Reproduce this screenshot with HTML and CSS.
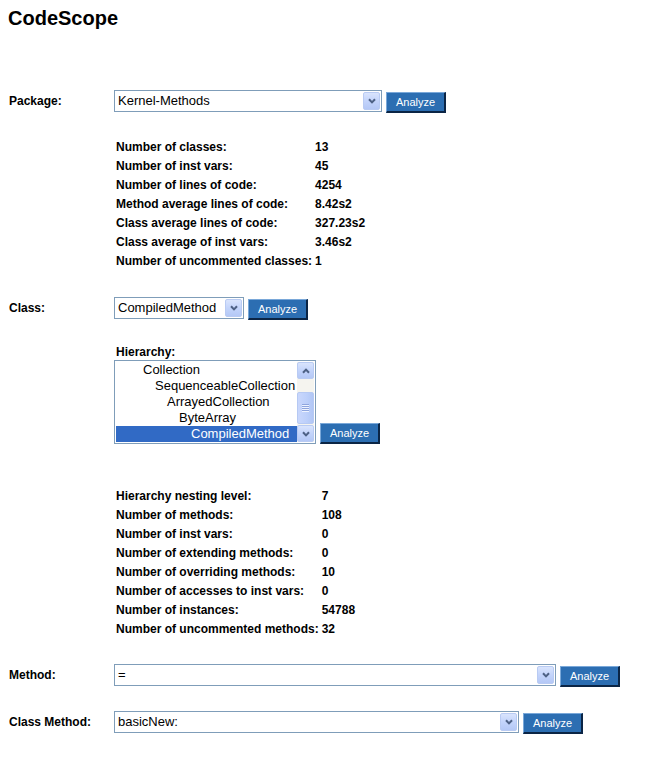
FILE: index.html
```html
<!DOCTYPE html>
<html lang="en">
<head>
<meta charset="utf-8">
<title>CodeScope</title>
<link rel="stylesheet" href="styles.css">
</head>
<body>
<h1 class="title">CodeScope</h1>

<div class="field field--package">
  <span class="field__label">Package:</span>
  <div class="combo combo--package" role="combobox">
    <span class="combo__text">Kernel-Methods</span>
    <span class="combo__arrow"><svg width="8" height="6" viewBox="0 0 8 6"><path d="M1 1.2 L4 4.4 L7 1.2" stroke="#4d6185" stroke-width="2" fill="none"/></svg></span>
  </div>
  <button class="btn">Analyze</button>
</div>

<div class="stats stats--package">
  <span>Number of classes:</span><span>13</span>
  <span>Number of inst vars:</span><span>45</span>
  <span>Number of lines of code:</span><span>4254</span>
  <span>Method average lines of code:</span><span>8.42s2</span>
  <span>Class average lines of code:</span><span>327.23s2</span>
  <span>Class average of inst vars:</span><span>3.46s2</span>
  <span>Number of uncommented classes:</span><span>1</span>
</div>

<div class="field field--class">
  <span class="field__label">Class:</span>
  <div class="combo combo--class" role="combobox">
    <span class="combo__text">CompiledMethod</span>
    <span class="combo__arrow"><svg width="8" height="6" viewBox="0 0 8 6"><path d="M1 1.2 L4 4.4 L7 1.2" stroke="#4d6185" stroke-width="2" fill="none"/></svg></span>
  </div>
  <button class="btn">Analyze</button>
</div>

<div class="hier">
  <div class="hier__label">Hierarchy:</div>
  <div class="hier__body">
    <div class="listbox" role="listbox">
      <div class="listbox__items">
        <div class="item lvl2">Collection</div>
        <div class="item lvl3">SequenceableCollection</div>
        <div class="item lvl4">ArrayedCollection</div>
        <div class="item lvl5">ByteArray</div>
        <div class="item lvl6 item--selected">CompiledMethod</div>
      </div>
      <div class="vscroll">
        <span class="vscroll__btn"><svg width="8" height="6" viewBox="0 0 8 6"><path d="M1 4.8 L4 1.6 L7 4.8" stroke="#4d6185" stroke-width="2" fill="none"/></svg></span>
        <span class="vscroll__track">
          <span class="vscroll__thumb"><svg width="7" height="8" viewBox="0 0 7 8"><path d="M0 0.5H7M0 2.5H7M0 4.5H7M0 6.5H7" stroke="#8ea5de" stroke-width="1"/><path d="M0 1.5H7M0 3.5H7M0 5.5H7M0 7.5H7" stroke="#eef3ff" stroke-width="1"/></svg></span>
        </span>
        <span class="vscroll__btn"><svg width="8" height="6" viewBox="0 0 8 6"><path d="M1 1.2 L4 4.4 L7 1.2" stroke="#4d6185" stroke-width="2" fill="none"/></svg></span>
      </div>
    </div>
    <button class="btn btn--list">Analyze</button>
  </div>
</div>

<div class="stats stats--class">
  <span>Hierarchy nesting level:</span><span>7</span>
  <span>Number of methods:</span><span>108</span>
  <span>Number of inst vars:</span><span>0</span>
  <span>Number of extending methods:</span><span>0</span>
  <span>Number of overriding methods:</span><span>10</span>
  <span>Number of accesses to inst vars:</span><span>0</span>
  <span>Number of instances:</span><span>54788</span>
  <span>Number of uncommented methods:</span><span>32</span>
</div>

<div class="field field--method">
  <span class="field__label">Method:</span>
  <div class="combo combo--method" role="combobox">
    <span class="combo__text">=</span>
    <span class="combo__arrow"><svg width="8" height="6" viewBox="0 0 8 6"><path d="M1 1.2 L4 4.4 L7 1.2" stroke="#4d6185" stroke-width="2" fill="none"/></svg></span>
  </div>
  <button class="btn">Analyze</button>
</div>

<div class="field field--cmethod">
  <span class="field__label">Class Method:</span>
  <div class="combo combo--cmethod" role="combobox">
    <span class="combo__text">basicNew:</span>
    <span class="combo__arrow"><svg width="8" height="6" viewBox="0 0 8 6"><path d="M1 1.2 L4 4.4 L7 1.2" stroke="#4d6185" stroke-width="2" fill="none"/></svg></span>
  </div>
  <button class="btn">Analyze</button>
</div>
</body>
</html>
```

FILE: styles.css
```css
body {
  margin: 8px;
  font-family: "Liberation Sans", Arial, sans-serif;
  color: #000;
  background: #fff;
}

.title {
  margin: 0;
  font-size: 20px;
  line-height: 20px;
  font-weight: bold;
}

.field {
  display: flex;
  align-items: flex-start;
  height: 23px;
}
.field--package { margin-top: 62px; }
.field--class { margin-top: 26px; }
.field--method { margin-top: 25px; }
.field--cmethod { margin-top: 24px; }

.field__label {
  width: 105px;
  margin-left: 1px;
  font-size: 12px;
  font-weight: bold;
  line-height: 22px;
}

.combo {
  box-sizing: border-box;
  height: 22px;
  border: 1px solid #7f9db9;
  padding: 1px;
  display: flex;
  align-items: center;
  background: #fff;
}
.combo--package { width: 268px; }
.combo--class { width: 130px; }
.combo--method { width: 442px; }
.combo--cmethod { width: 405px; }

.combo__text {
  flex: 1;
  padding-left: 2px;
  font-size: 13px;
  line-height: 18px;
  white-space: nowrap;
  overflow: hidden;
}

.combo__arrow,
.vscroll__btn {
  box-sizing: border-box;
  width: 17px;
  height: 18px;
  display: flex;
  align-items: center;
  justify-content: center;
  background: linear-gradient(180deg, #d9e4fd 0%, #c3d4fb 50%, #b4c8f6 100%);
  border: 1px solid #b9cbf3;
  border-radius: 2px;
}

.btn {
  box-sizing: border-box;
  width: 60px;
  height: 21px;
  margin-left: 4px;
  margin-top: 2px;
  padding: 0;
  font-family: "Liberation Sans", Arial, sans-serif;
  font-size: 11px;
  color: #fff;
  background: #2c6eb2;
  border-style: solid;
  border-width: 1px 2px 2px 1px;
  border-color: #7aa8d9 #0b2545 #0b2545 #7aa8d9;
}

.stats {
  display: grid;
  grid-template-columns: max-content max-content;
  column-gap: 3px;
  margin-left: 108px;
  font-size: 12px;
  font-weight: bold;
  line-height: 19px;
}
.stats--package { margin-top: 25px; }
.stats--class { margin-top: 43px; }

.hier { margin-top: 24px; }
.hier__label {
  margin-left: 108px;
  font-size: 12px;
  font-weight: bold;
  line-height: 16px;
}
.hier__body {
  margin-left: 106px;
  display: flex;
  align-items: flex-end;
}

.listbox {
  box-sizing: border-box;
  width: 202px;
  height: 84px;
  border: 1px solid #7f9db9;
  padding: 1px;
  display: flex;
  background: #fff;
}
.listbox__items {
  flex: 1;
  min-width: 0;
  font-size: 13px;
  line-height: 16px;
}
.item {
  height: 16px;
  white-space: nowrap;
  overflow: hidden;
}
.lvl2 { padding-left: 27px; }
.lvl3 { padding-left: 39px; }
.lvl4 { padding-left: 51px; }
.lvl5 { padding-left: 63px; }
.lvl6 { padding-left: 75px; }
.item--selected {
  background: #316ac5;
  color: #fff;
}

.vscroll {
  width: 17px;
  display: flex;
  flex-direction: column;
  background: #f5f4ef;
}
.vscroll__btn { height: 17px; }
.vscroll__track {
  flex: 1;
  display: flex;
  flex-direction: column;
  justify-content: flex-end;
}
.vscroll__thumb {
  box-sizing: border-box;
  height: 32px;
  margin-bottom: 1px;
  display: flex;
  align-items: center;
  justify-content: center;
  background: linear-gradient(90deg, #c9d7fc 0%, #bccffa 60%, #b1c6f5 100%);
  border: 1px solid #b6c9f3;
  border-radius: 2px;
}

.btn--list {
  margin-top: 0;
  margin-bottom: 0;
}
```
